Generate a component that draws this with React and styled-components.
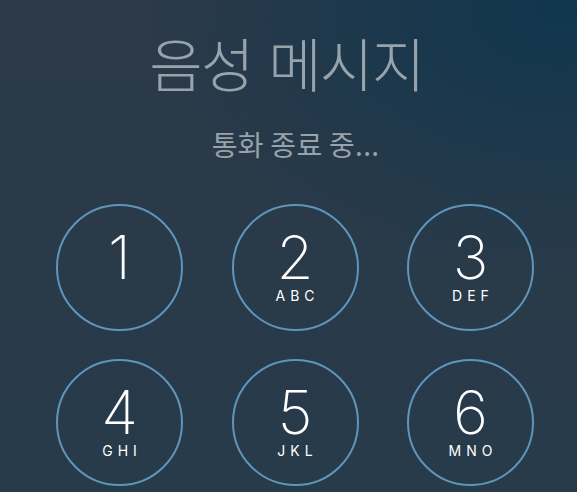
import React from "react";
import styled, { createGlobalStyle } from "styled-components";

const Global = createGlobalStyle`
  html, body {
    margin: 0;
    padding: 0;
    width: 577px;
    height: 492px;
    overflow: hidden;
  }
`;

const Screen = styled.div`
  width: 577px;
  height: 492px;
  display: flex;
  flex-direction: column;
  align-items: center;
  background:
    radial-gradient(ellipse 420px 260px at 560px 10px, rgba(14, 54, 78, 0.95), rgba(14, 54, 78, 0) 100%),
    linear-gradient(180deg, #2c3a49 0%, #293a49 60%, #273b4b 100%);
  font-family: "Noto Sans CJK KR", "Noto Sans", sans-serif;
  overflow: hidden;
`;

const Title = styled.div`
  margin-top: 23px;
  margin-left: -4px;
  font-size: 58px;
  font-weight: 300;
  line-height: 78px;
  letter-spacing: -1.5px;
  word-spacing: 4px;
  color: #98a3ab;
`;

const Status = styled.div`
  margin-top: 23px;
  margin-left: 14px;
  font-size: 28px;
  font-weight: 400;
  line-height: 40px;
  letter-spacing: 0.3px;
  color: #99a2aa;
`;

const Keypad = styled.div`
  margin-top: 40px;
  margin-left: 13px;
  display: grid;
  grid-template-columns: repeat(3, 127px);
  column-gap: 48.5px;
  row-gap: 28px;
`;

const Key = styled.div`
  width: 127px;
  height: 127px;
  box-sizing: border-box;
  border: 2px solid #5f95bb;
  border-radius: 50%;
  display: flex;
  flex-direction: column;
  align-items: center;
  justify-content: flex-start;
  padding-top: 27px;
  color: #ffffff;
`;

const Digit = styled.div`
  font-family: "Inter", "Roboto", sans-serif;
  font-weight: 200;
  font-size: 60px;
  line-height: 48px;
`;

const Letters = styled.div`
  font-family: "Inter", "Liberation Sans", sans-serif;
  font-size: 14px;
  font-weight: 400;
  letter-spacing: 5px;
  margin-right: -5px;
  line-height: 14px;
  margin-top: 8px;
`;

const keys = [
  ["1", ""],
  ["2", "ABC"],
  ["3", "DEF"],
  ["4", "GHI"],
  ["5", "JKL"],
  ["6", "MNO"],
];

export default function App() {
  return (
    <Screen>
      <Global />
      <Title>음성 메시지</Title>
      <Status>통화 종료 중...</Status>
      <Keypad>
        {keys.map(([d, l]) => (
          <Key key={d}>
            <Digit>{d}</Digit>
            {l && <Letters>{l}</Letters>}
          </Key>
        ))}
      </Keypad>
    </Screen>
  );
}
